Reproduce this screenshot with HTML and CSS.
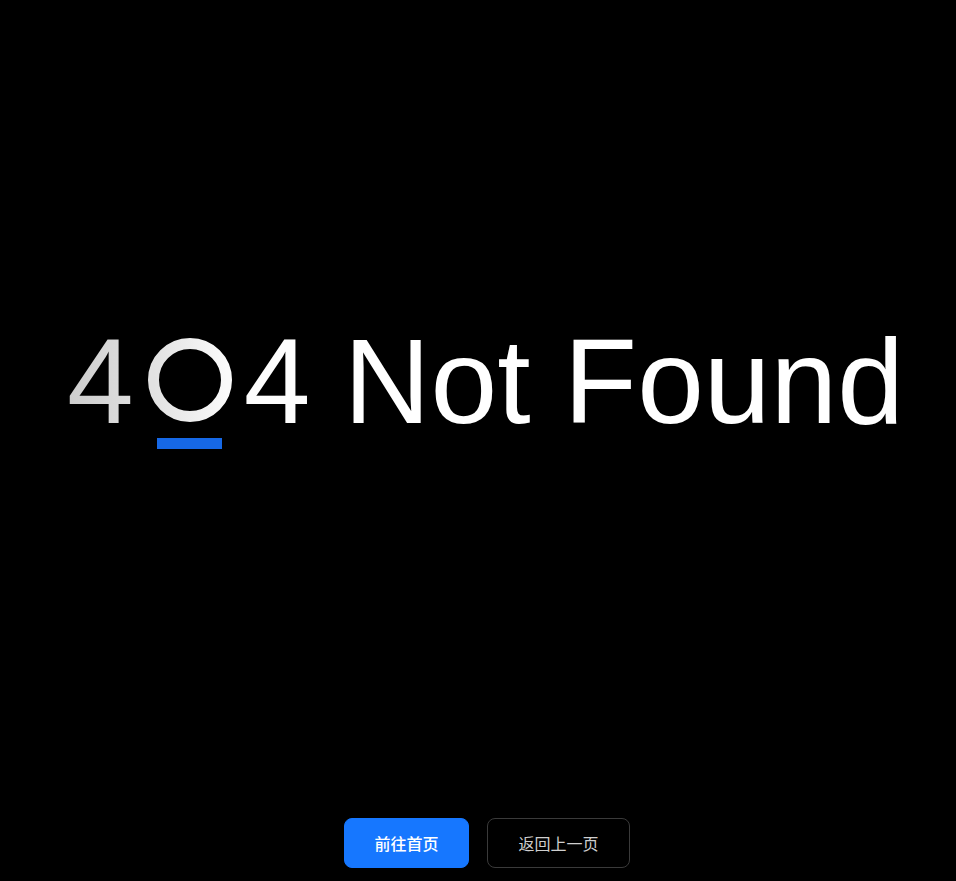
FILE: index.html
```html
<!DOCTYPE html>
<html lang="zh-CN">
<head>
<meta charset="utf-8">
<title>404 Not Found</title>
<link rel="stylesheet" href="styles.css">
</head>
<body>
<div class="page">
  <main class="hero">
    <h1 class="title">
      <span class="digit digit-first">4</span>
      <span class="zero">
        <svg class="ring" width="84" height="84" viewBox="0 0 84 84">
          <defs>
            <linearGradient id="ringGrad" x1="0" y1="0" x2="1" y2="0">
              <stop offset="0" stop-color="#e2e2e2"/>
              <stop offset="1" stop-color="#fafafa"/>
            </linearGradient>
          </defs>
          <circle cx="42" cy="42" r="36.5" fill="none" stroke="url(#ringGrad)" stroke-width="11"/>
        </svg>
        <span class="bar"></span>
      </span>
      <span class="digit digit-last">4</span>
      <span class="rest">&nbsp;Not Found</span>
    </h1>
  </main>
  <footer class="actions">
    <button class="btn btn-primary" type="button">前往首页</button>
    <button class="btn btn-ghost" type="button">返回上一页</button>
  </footer>
</div>
</body>
</html>
```
FILE: styles.css
```css
html, body {
  margin: 0;
  padding: 0;
  background: #000;
}

.page {
  height: 100vh;
  display: flex;
  flex-direction: column;
  font-family: "Liberation Sans", Arial, sans-serif;
}

.hero {
  flex: 1;
  display: flex;
  align-items: center;
  justify-content: center;
  padding-left: 15px;
  padding-bottom: 48px;
}

.title {
  margin: 0;
  display: flex;
  align-items: flex-start;
  font-family: "Liberation Sans", Arial, sans-serif;
  font-weight: 400;
  font-size: 120px;
  line-height: 120px;
  color: #fff;
  white-space: nowrap;
}

.digit-first {
  background: linear-gradient(90deg, #cdcdcd, #dedede);
  -webkit-background-clip: text;
  background-clip: text;
  color: transparent;
}

.digit-last {
  color: #fdfdfd;
}

.zero {
  display: flex;
  flex-direction: column;
  align-items: center;
  width: 84px;
  margin: 17px 12px 0 14px;
}

.ring {
  display: block;
}

.bar {
  display: block;
  width: 65px;
  height: 11px;
  margin-top: 16px;
  background: #1668e6;
}

.actions {
  display: flex;
  justify-content: center;
  gap: 18px;
  padding: 0 0 13px 18px;
}

.btn {
  box-sizing: border-box;
  height: 50px;
  padding: 0 30px;
  border-radius: 8px;
  font-family: "Noto Sans CJK SC", "Noto Sans", sans-serif;
  font-size: 16px;
  line-height: 1;
  cursor: pointer;
}

.btn-primary {
  padding: 0 29.5px;
  background: #1677ff;
  border: 1px solid #1677ff;
  color: #fff;
  font-weight: 500;
}

.btn-ghost {
  padding: 0 30.5px;
  background: #000;
  border: 1px solid #3a3a3a;
  color: #cfcfcf;
  font-weight: 400;
}
```
